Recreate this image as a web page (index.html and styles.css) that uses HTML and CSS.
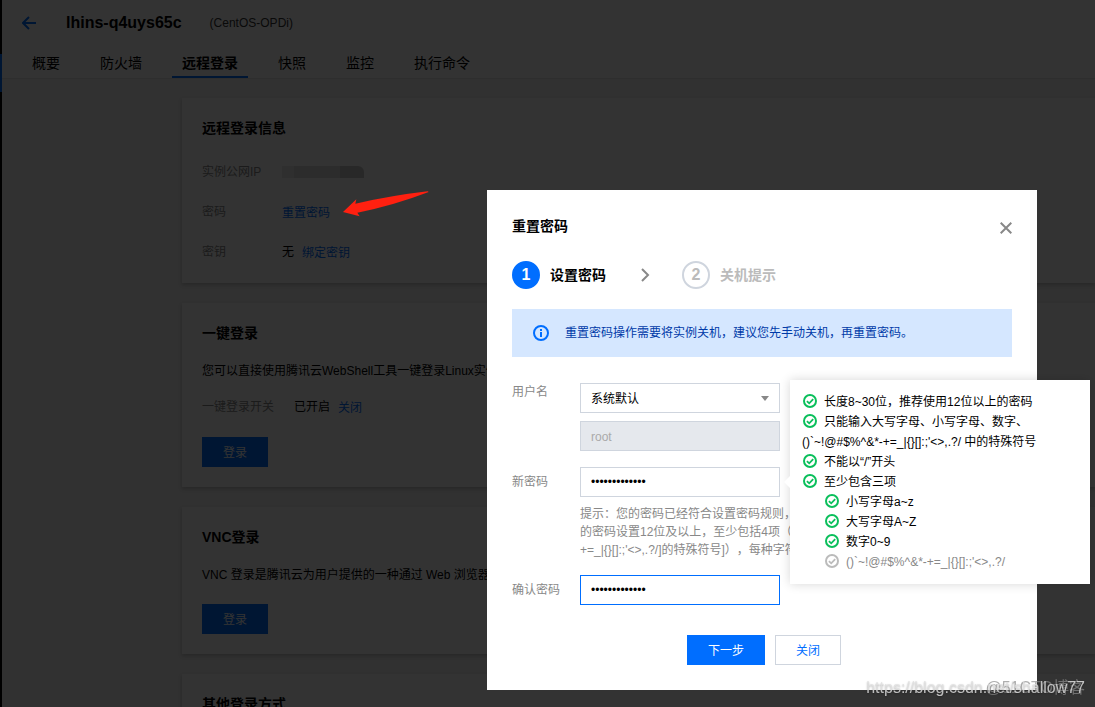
FILE: index.html
```html
<!DOCTYPE html>
<html lang="zh-CN">
<head>
<meta charset="utf-8">
<title>远程登录</title>
<link rel="stylesheet" href="styles.css">
</head>
<body>
<svg class="sprite" aria-hidden="true">
  <symbol id="check" viewBox="0 0 14 14">
    <circle cx="7" cy="7" r="6" fill="none" stroke="currentColor" stroke-width="2"/>
    <path d="M3.9 7.1 6.2 9.3 10.2 5.1" fill="none" stroke="currentColor" stroke-width="1.8"/>
  </symbol>
</svg>

<div class="app">
  <aside class="rail"><span class="rail-active"></span></aside>
  <div class="page">
    <header class="header">
      <div class="heading">
        <a class="back" href="#" aria-label="返回">
          <svg width="14" height="14" viewBox="0 0 14 14"><path d="M14 7H1.500M7 1 1 7l6 6" fill="none" stroke="currentColor" stroke-width="2"/></svg>
        </a>
        <h1 class="instance">lhins-q4uys65c</h1>
        <span class="system">(CentOS-OPDi)</span>
      </div>
      <nav class="tabs">
        <a class="tab" href="#">概要</a>
        <a class="tab" href="#">防火墙</a>
        <a class="tab tab-active" href="#">远程登录</a>
        <a class="tab" href="#">快照</a>
        <a class="tab" href="#">监控</a>
        <a class="tab" href="#">执行命令</a>
      </nav>
    </header>
    <main class="cards">
      <section class="card">
        <h2 class="card-title card-title-wide">远程登录信息</h2>
        <dl class="facts">
          <dt>实例公网IP</dt><dd><span class="masked"></span></dd>
          <dt>密码</dt><dd><a href="#">重置密码</a></dd>
          <dt>密钥</dt><dd>无 <a href="#">绑定密钥</a></dd>
        </dl>
      </section>
      <section class="card">
        <h2 class="card-title">一键登录</h2>
        <p class="desc">您可以直接使用腾讯云WebShell工具一键登录Linux实例</p>
        <p class="switch"><span class="switch-label">一键登录开关</span><span>已开启</span><a href="#">关闭</a></p>
        <button class="btn btn-primary" type="button">登录</button>
      </section>
      <section class="card">
        <h2 class="card-title">VNC登录</h2>
        <p class="desc desc-last">VNC 登录是腾讯云为用户提供的一种通过 Web 浏览器</p>
        <button class="btn btn-primary" type="button">登录</button>
      </section>
      <section class="card">
        <h2 class="card-title">其他登录方式</h2>
      </section>
    </main>
  </div>
</div>

<div class="overlay">
  <svg class="pointer" width="86" height="26" viewBox="490 287 258 78"><path d="M490 350 530 312 527 325 Q640 300 744 288 L747 290 Q640 331 533 352 L540 363Z" fill="#ff2010"/></svg>

  <section class="dialog" role="dialog" aria-labelledby="dialog-title">
    <div class="dialog-head">
      <h2 class="dialog-title" id="dialog-title">重置密码</h2>
      <button class="close" type="button" aria-label="关闭">
        <svg width="12" height="12" viewBox="0 0 12 12"><path d="M.7.7 11.300 11.300M11.300.7.7 11.300" stroke="currentColor" stroke-width="2"/></svg>
      </button>
    </div>
    <ol class="steps">
      <li class="step step-current"><span class="step-num">1</span>设置密码</li>
      <li class="step-arrow" aria-hidden="true"><svg width="9" height="14" viewBox="0 0 9 14"><path d="M1 1l6 6-6 6" fill="none" stroke="currentColor" stroke-width="2"/></svg></li>
      <li class="step"><span class="step-num">2</span>关机提示</li>
    </ol>
    <div class="notice">
      <svg width="16" height="16" viewBox="0 0 16 16"><circle cx="8" cy="8" r="7" fill="none" stroke="#006eff" stroke-width="2"/><path d="M7 4h2v2H7zM7 7h2v5H7z" fill="#006eff"/></svg>
      <span>重置密码操作需要将实例关机，建议您先手动关机，再重置密码。</span>
    </div>
    <form class="form">
      <label class="label label-top" for="user">用户名</label>
      <div class="user">
        <div class="select-wrap">
          <select class="field" id="user"><option>系统默认</option></select>
          <svg class="caret" width="8" height="5" viewBox="0 0 8 5"><path d="M0 0h8L4 5z" fill="#888"/></svg>
        </div>
        <input class="field" type="text" value="root" aria-label="用户名" disabled>
      </div>
      <label class="label" for="pwd">新密码</label>
      <div class="pwd">
        <input class="field" id="pwd" type="password" value="Lighthouse#12">
        <p class="hint">提示：您的密码已经符合设置密码规则，<br>的密码设置12位及以上，至少包括4项（<br>+=_|{}[]:;'&lt;&gt;,.?/]的特殊符号]），每种字符</p>
        <div class="rules" role="tooltip">
          <ul class="rule-list">
            <li><svg class="check"><use href="#check"/></svg>长度8~30位，推荐使用12位以上的密码</li>
            <li><svg class="check"><use href="#check"/></svg>只能输入大写字母、小写字母、数字、<br>()`~!@#$%^&amp;*-+=_|{}[]:;'&lt;&gt;,.?/ 中的特殊符号</li>
            <li><svg class="check"><use href="#check"/></svg>不能以“/”开头</li>
            <li><svg class="check"><use href="#check"/></svg>至少包含三项
              <ul class="rule-list rule-sub">
                <li><svg class="check"><use href="#check"/></svg>小写字母a~z</li>
                <li><svg class="check"><use href="#check"/></svg>大写字母A~Z</li>
                <li><svg class="check"><use href="#check"/></svg>数字0~9</li>
                <li class="rule-off"><svg class="check"><use href="#check"/></svg>()`~!@#$%^&amp;*-+=_|{}[]:;'&lt;&gt;,.?/</li>
              </ul>
            </li>
          </ul>
        </div>
      </div>
      <label class="label" for="confirm">确认密码</label>
      <input class="field field-focus" id="confirm" type="password" value="Lighthouse#12">
    </form>
    <div class="actions">
      <button class="btn btn-primary" type="button">下一步</button>
      <button class="btn btn-plain" type="button">关闭</button>
    </div>
  </section>

  <span class="mark mark-host">@51CTO博客</span>
  <span class="mark mark-blog">https://blog.csdn.net/shallow77</span>
</div>
</body>
</html>
```

FILE: styles.css
```css
* { box-sizing: border-box; }

body {
  margin: 0;
  height: 100vh;
  overflow: hidden;
  font: 12px/20px "Liberation Sans", "Noto Sans CJK SC", sans-serif;
  color: #000;
  background: #f2f2f2;
  text-spacing-trim: space-all;
}

h1, h2, p, dl, dd, ol, ul { margin: 0; padding: 0; }
ol, ul { list-style: none; }
a { color: #006eff; text-decoration: none; }
svg { display: block; }
button, input, select { font: inherit; }
.sprite { position: absolute; width: 0; height: 0; }

.app { display: flex; height: 100vh; overflow: hidden; }
.rail { width: 2px; background: #000; padding-top: 54px; }
.rail-active { display: block; height: 38px; background: #006eff; }
.page { flex: 1; min-width: 0; }

.header { background: #fff; border-bottom: 1px solid #e5e5e5; }
.heading { display: flex; align-items: center; height: 46px; padding-left: 20px; }
.back { width: 44px; }
.instance { font-size: 16px; font-weight: bold; }
.system { margin-left: 28px; color: #333; }
.tabs { display: flex; gap: 20px; padding-left: 20px; }
.tab { padding: 0 10px; height: 32px; line-height: 34px; font-size: 14px; color: #000; }
.tab-active { font-weight: bold; border-bottom: 2px solid #006eff; }

.cards { display: flex; flex-direction: column; gap: 20px; padding: 19px 0 0 180px; }
.card { padding: 20px; background: #fff; box-shadow: 0 2px 4px rgba(0, 0, 0, .2); }
.card-title { margin-bottom: 18px; font-size: 14px; font-weight: bold; }
.card-title-wide { margin-bottom: 24px; }
.facts { display: grid; grid-template-columns: 80px 1fr; row-gap: 20px; margin-bottom: 1px; }
.facts dt, .switch-label { color: #888; }
.facts dd { display: flex; gap: 8px; }
.facts a, .switch a { padding-top: 1px; line-height: 20px; height: 20px; }
.masked { display: block; width: 82px; height: 12px; margin-top: 4px; background: linear-gradient(90deg, #eaeaea 0 12px, #dadada 12px 58px, #c8c8c8 58px); border-top-right-radius: 6px; }
.desc { margin-bottom: 16px; white-space: nowrap; }
.desc-last { margin-bottom: 19px; }
.switch { display: flex; margin-bottom: 20px; }
.switch-label { margin-right: 20px; }
.switch a { margin-left: 8px; }

.btn { display: block; height: 30px; padding: 1px 20px 0; border: 1px solid #006eff; line-height: 28px; }
.btn-primary { background: #006eff; color: #fff; }
.btn-plain { background: #fff; border-color: #cfd5de; color: #006eff; }
.card .btn, .actions .btn { min-width: 66px; }

.overlay { position: fixed; inset: 0; background: rgba(0, 0, 0, .8); }
.pointer { position: absolute; left: 343px; top: 191px; }

.dialog { position: absolute; top: 190px; right: 58px; width: 550px; padding: 25px; background: #fff; }
.dialog-head { display: flex; align-items: center; justify-content: space-between; height: 22px; margin-bottom: 24px; }
.dialog-title { font-size: 14px; font-weight: bold; }
.close { padding: 4px 0 0; border: 0; background: none; color: #888; }

.steps { display: flex; align-items: center; margin-bottom: 20px; font-size: 14px; font-weight: bold; color: #bbb; }
.step { display: flex; align-items: center; gap: 10px; }
.step-num { width: 28px; height: 28px; border: 2px solid #cfd5de; border-radius: 50%; line-height: 24px; font-size: 16px; text-align: center; }
.step-current { color: #000; }
.step-current .step-num { background: #006eff; border-color: #006eff; color: #fff; }
.step-arrow { margin: 0 32px 0 35px; color: #888; }

.notice { display: flex; align-items: center; gap: 16px; min-height: 48px; padding: 0 21px; margin-bottom: 26px; background: #d5e7ff; color: #003aa8; }

.form { display: grid; grid-template-columns: 68px 200px; row-gap: 16px; margin-bottom: 30px; }
.label { line-height: 30px; color: #888; }
.label-top { line-height: 18px; }
.user { display: grid; gap: 8px; }
.select-wrap { position: relative; }
.field { display: block; width: 100%; height: 30px; padding: 1px 10px 0; border: 1px solid #cfd5de; border-radius: 0; background: #fff; color: #000; appearance: none; outline: 0; }
.field[type="password"] { padding-top: 0; }
.field:disabled { background: #e5e8ed; color: #aaa; }
.field-focus { border-color: #006eff; }
.caret { position: absolute; right: 11px; top: 13px; }
.pwd { position: relative; }
.hint { margin-top: 8px; line-height: 18px; color: #888; white-space: nowrap; }

.rules { position: absolute; left: 210px; top: -87px; width: 300px; padding: 12px; background: #fff; box-shadow: 0 0 10px rgba(0, 0, 0, .16); }
.rules::before { content: ""; position: absolute; right: 100%; top: 96px; border: 6px solid transparent; border-right-color: #fff; border-left: 0; }
.rule-sub { padding-left: 22px; }
.check { display: inline-block; width: 14px; height: 14px; margin: 0 7px 0 1px; vertical-align: -2px; color: #0abf5b; }
.rule-off { color: #888; }
.rule-off .check { color: #bbb; }

.actions { display: flex; justify-content: center; gap: 10px; padding-left: 4px; }

.mark { position: absolute; right: 10px; bottom: 8px; font-size: 16px; line-height: 22px; white-space: nowrap; }
.mark-blog { color: rgba(225, 225, 225, .8); text-shadow: 0 1px 2px rgba(0, 0, 0, .3); }
.mark-host { color: rgba(140, 140, 140, .7); }
```
